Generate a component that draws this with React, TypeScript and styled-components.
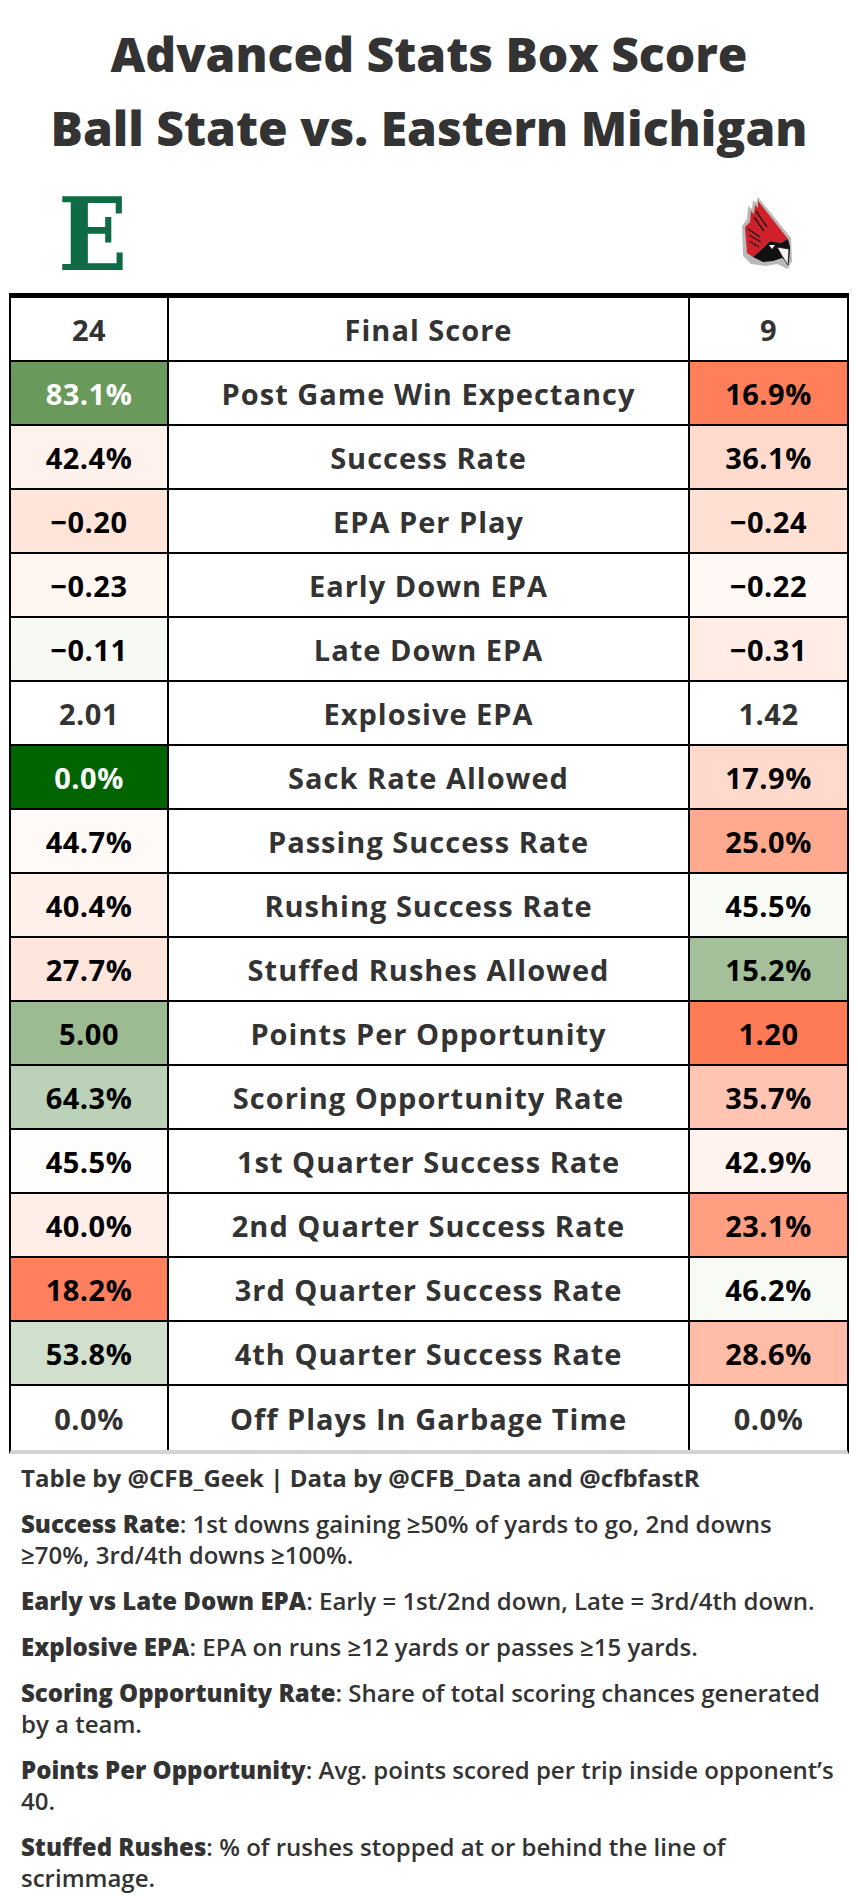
import { Fragment } from "react";
import styled, { createGlobalStyle } from "styled-components";

type Row = {
  label: string;
  left: string;
  right: string;
  leftBg?: string;
  rightBg?: string;
  leftLight?: boolean;
  rightLight?: boolean;
};

const rows: Row[] = [
  { label: "Final Score", left: "24", right: "9" },
  { label: "Post Game Win Expectancy", left: "83.1%", leftBg: "#6a9a5b", leftLight: true, right: "16.9%", rightBg: "#ff7f5a" },
  { label: "Success Rate", left: "42.4%", leftBg: "#fff1ec", right: "36.1%", rightBg: "#ffdacd" },
  { label: "EPA Per Play", left: "\u22120.20", leftBg: "#ffe4d9", right: "\u22120.24", rightBg: "#ffe0d3" },
  { label: "Early Down EPA", left: "\u22120.23", leftBg: "#fff6f2", right: "\u22120.22", rightBg: "#fff8f4" },
  { label: "Late Down EPA", left: "\u22120.11", leftBg: "#f7f9f5", right: "\u22120.31", rightBg: "#ffece4" },
  { label: "Explosive EPA", left: "2.01", right: "1.42" },
  { label: "Sack Rate Allowed", left: "0.0%", leftBg: "#006400", leftLight: true, right: "17.9%", rightBg: "#ffdacc" },
  { label: "Passing Success Rate", left: "44.7%", leftBg: "#fffaf8", right: "25.0%", rightBg: "#ffa98e" },
  { label: "Rushing Success Rate", left: "40.4%", leftBg: "#fff0ea", right: "45.5%", rightBg: "#f9fbf7" },
  { label: "Stuffed Rushes Allowed", left: "27.7%", leftBg: "#ffe6dd", right: "15.2%", rightBg: "#a3c09a" },
  { label: "Points Per Opportunity", left: "5.00", leftBg: "#9dbb93", right: "1.20", rightBg: "#ff7b56" },
  { label: "Scoring Opportunity Rate", left: "64.3%", leftBg: "#bcd2b8", right: "35.7%", rightBg: "#ffc4b2" },
  { label: "1st Quarter Success Rate", left: "45.5%", leftBg: "#fdfdfb", right: "42.9%", rightBg: "#fff3ef" },
  { label: "2nd Quarter Success Rate", left: "40.0%", leftBg: "#ffeee8", right: "23.1%", rightBg: "#ff9e80" },
  { label: "3rd Quarter Success Rate", left: "18.2%", leftBg: "#ff7f5f", right: "46.2%", rightBg: "#f8faf6" },
  { label: "4th Quarter Success Rate", left: "53.8%", leftBg: "#d0e0cc", right: "28.6%", rightBg: "#ffbca7" },
  { label: "Off Plays In Garbage Time", left: "0.0%", right: "0.0%" },
];

// line breaks follow the original caption
const notes = [
  { term: "Success Rate", lines: [": 1st downs gaining \u226550% of yards to go, 2nd downs", "\u226570%, 3rd/4th downs \u2265100%."] },
  { term: "Early vs Late Down EPA", lines: [": Early = 1st/2nd down, Late = 3rd/4th down."] },
  { term: "Explosive EPA", lines: [": EPA on runs \u226512 yards or passes \u226515 yards."] },
  { term: "Scoring Opportunity Rate", lines: [": Share of total scoring chances generated", "by a team."] },
  { term: "Points Per Opportunity", lines: [": Avg. points scored per trip inside opponent\u2019s", "40."] },
  { term: "Stuffed Rushes", lines: [": % of rushes stopped at or behind the line of", "scrimmage."] },
];

export default function App() {
  return (
    <Page>
      <GlobalStyle />
      <Title>
        Advanced Stats Box Score
        <br />
        Ball State vs. Eastern Michigan
      </Title>
      <LogoRow>
        <EmuLogo>E</EmuLogo>
        <Cardinal />
      </LogoRow>
      <Table>
        {rows.map((r, idx) => (
          <TableRow key={r.label} $last={idx === rows.length - 1}>
            <ValueCell $bg={r.leftBg} $light={r.leftLight}>{r.left}</ValueCell>
            <LabelCell>{r.label}</LabelCell>
            <ValueCell $bg={r.rightBg} $light={r.rightLight} $end>{r.right}</ValueCell>
          </TableRow>
        ))}
      </Table>
      <Notes>
        <Credit>Table by @CFB_Geek | Data by @CFB_Data and @cfbfastR</Credit>
        {notes.map((n) => (
          <Note key={n.term}>
            <b>{n.term}</b>
            {n.lines.map((l, i) => (
              <Fragment key={i}>
                {i > 0 && <br />}
                {l}
              </Fragment>
            ))}
          </Note>
        ))}
      </Notes>
    </Page>
  );
}

function Cardinal() {
  return (
    <CardinalSvg viewBox="0 0 50 72" width="50" height="72">
      <path d="M16 0 L49 41 L50 64 L46 72 L35 67 L24 69 L9 67 L1 59 L0 29 L5 22 L6 9 L10 12 L11 3 L14 6 Z" fill="#b9b9b9" />
      <path d="M16 4 L46 42 L39 46 L28 44 L20 52 L11 60 L5 56 L3 30 L8 25 L9 14 L12 17 L13 8 L16 11 Z" fill="#d0202a" />
      <path d="M6 32 L18 40 M7 38 L19 45 M7 44 L17 50 M12 20 L22 34 M14 14 L25 30" stroke="#1a1a1a" strokeWidth="1.4" fill="none" />
      <path d="M20 52 L28 44 L39 46 L46 42 L48 50 L47 66 L40 61 L31 64 L21 65 L11 60 Z" fill="#111" />
      <path d="M35 50 L47 52 L46 68 L40 59 Z" fill="#f2f2f2" stroke="#111" strokeWidth="0.8" />
      <path d="M27 48 L33 48 L30 52 Z" fill="#fff" />
    </CardinalSvg>
  );
}

const GlobalStyle = createGlobalStyle`
  body {
    margin: 0;
    background: #fff;
  }
`;

const Page = styled.div`
  width: 858px;
  background: #fff;
  font-family: "Open Sans", Roboto, sans-serif;
`;

const Title = styled.h1`
  margin: 0;
  padding-top: 17px;
  font-family: "Open Sans", Roboto, sans-serif;
  font-weight: 800;
  font-size: 48px;
  line-height: 74px;
  color: #333;
  text-align: center;
`;

const LogoRow = styled.div`
  display: flex;
  justify-content: space-between;
  align-items: flex-start;
  height: 109px;
  margin-top: 19px;
  padding: 0 66px 0 58px;
`;

const EmuLogo = styled.div`
  font-family: "DejaVu Serif", serif;
  font-weight: 700;
  font-size: 101px;
  line-height: 101px;
  color: #0f6b45;
  transform: scaleX(0.9);
  transform-origin: left top;
`;

const CardinalSvg = styled.svg`
  display: block;
  margin-top: 13px;
`;

const Table = styled.div`
  margin: 0 9px;
  border-top: 5px solid #000;
  border-left: 2px solid #000;
  border-right: 2px solid #000;
  border-bottom: 4px solid #d3d3d3;
`;

const TableRow = styled.div<{ $last?: boolean }>`
  display: grid;
  grid-template-columns: 158px 521px 157px;
  height: 64px;
  box-sizing: border-box;
  border-bottom: ${(p) => (p.$last ? "none" : "2px solid #000")};
`;

const Cell = styled.div`
  display: flex;
  align-items: center;
  justify-content: center;
  box-sizing: border-box;
  font-family: "Open Sans", Roboto, sans-serif;
  font-weight: 700;
  font-size: 29px;
  letter-spacing: 1px;
`;

const ValueCell = styled(Cell)<{ $bg?: string; $light?: boolean; $end?: boolean }>`
  background: ${(p) => p.$bg ?? "#fff"};
  color: ${(p) => (p.$light ? "#fff" : p.$bg ? "#000" : "#333")};
  border-right: ${(p) => (p.$end ? "none" : "2px solid #000")};
  letter-spacing: 0.5px;
`;

const LabelCell = styled(Cell)`
  color: #333;
  border-right: 2px solid #000;
`;

const Notes = styled.div`
  padding: 8px 0 0 21px;
  color: #333;
  font-family: "Open Sans", Roboto, sans-serif;
  font-size: 24px;
  line-height: 31px;
  white-space: nowrap;
`;

const Credit = styled.p`
  margin: 0 0 15px;
  font-weight: 700;
`;

const Note = styled.p`
  margin: 0 0 15px;
  font-weight: 600;
  b {
    font-weight: 800;
  }
`;
